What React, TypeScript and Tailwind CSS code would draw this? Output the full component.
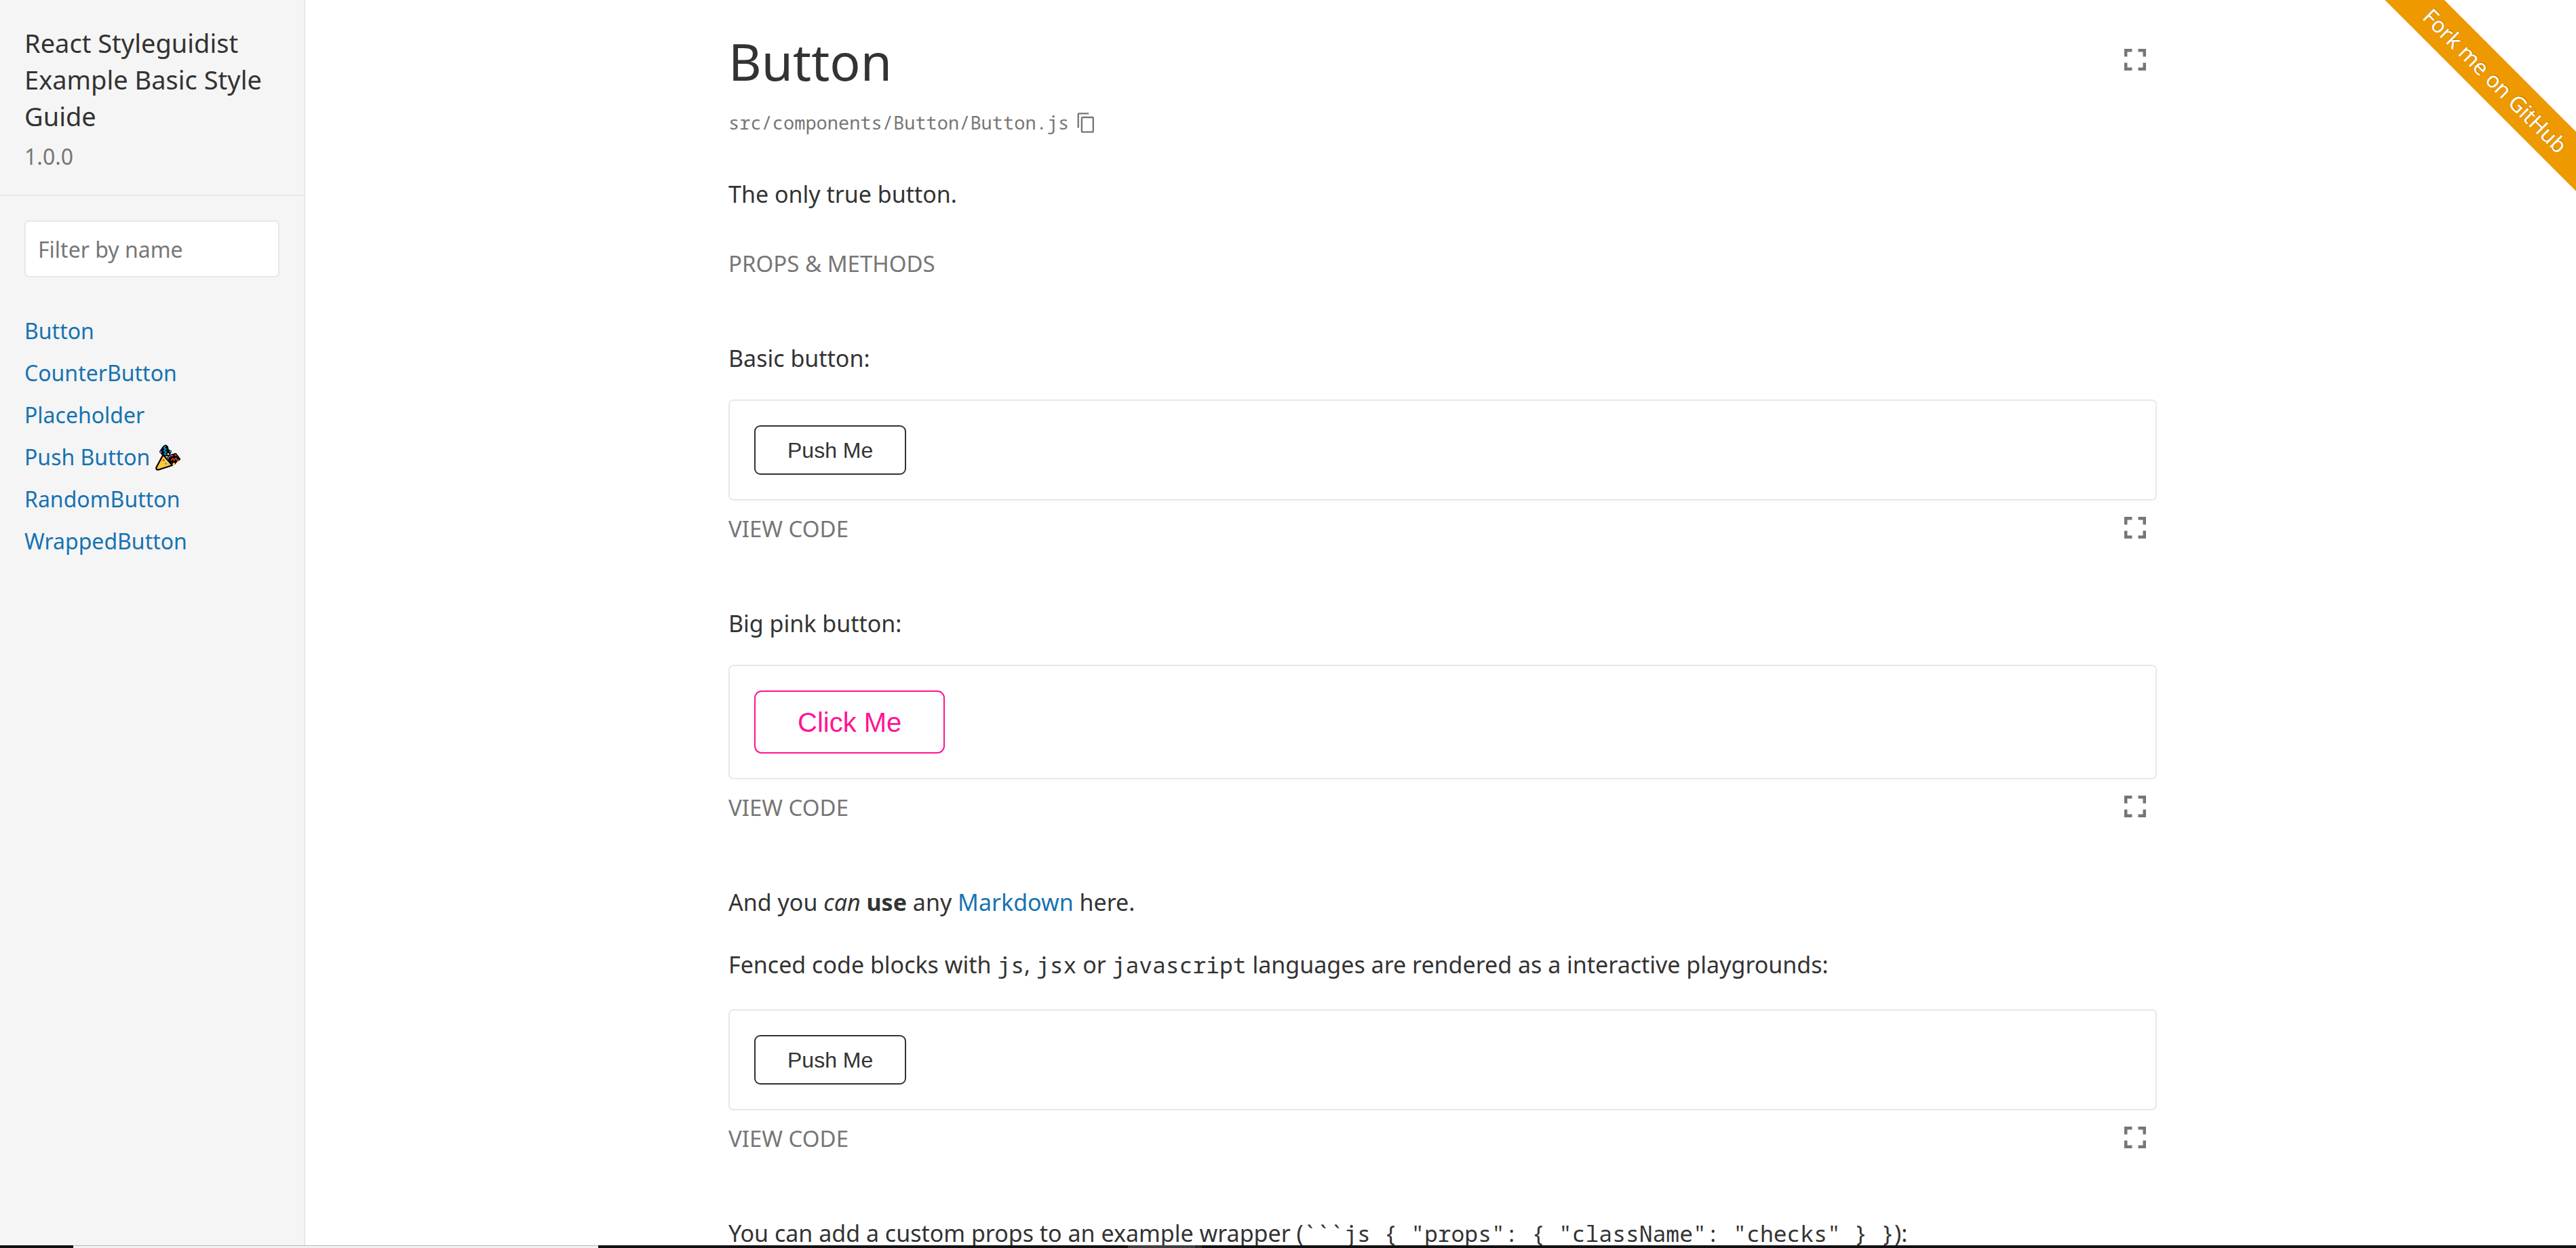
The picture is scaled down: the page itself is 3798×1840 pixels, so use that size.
import type { ReactNode } from "react";

function Fullscreen() {
  return (
    <button type="button" aria-label="Open isolated" className="mr-4 mb-1 text-[#767676]">
      <svg viewBox="0 0 32 32" className="block size-8" fill="currentColor" aria-hidden="true">
        <path d="M0 0h11.500v4.500H4.500V11.500H0zM20.500 0H32v11.500h-4.500V4.500h-7zM0 20.500h4.500v7h7V32H0zM27.500 20.500H32V32H20.500v-4.500h7z" />
      </svg>
    </button>
  );
}

function Party() {
  return (
    <svg viewBox="5 4 38 39" className="h-[39px] w-[38px]" aria-hidden="true">
      <g stroke="#000" strokeLinejoin="round" strokeLinecap="round" fill="#000">
        <path strokeWidth="4" d="M13 15L17 9L20 6.500L22 8L23 13L27 14.500L24 20L17 19Z" />
        <path strokeWidth="4" d="M24 25L28 21L35 19L37 22L40 26L36 28L33 32L29 30Z" />
      </g>
      <path d="M16.500 19.500L30 35L10 41.500Q5.500 42 6.500 38Z" fill="#ffc83d" stroke="#000" strokeWidth="2.200" strokeLinejoin="round" />
      <g fill="none" strokeWidth="1.500" strokeLinecap="round" strokeLinejoin="round">
        <path d="M20 7L17.500 9.500L21 11L17.500 13.500L21.500 15.500L18 18L21 19.500" stroke="#00a6ed" />
        <path d="M23.500 26Q24.500 21 31 20.500" stroke="#8467d7" />
        <path d="M28 28L31 24.500L32.500 28L35.500 24L37 28L39.500 27" stroke="#f03a17" />
      </g>
      <circle cx="13" cy="15.500" r="1.400" fill="#8467d7" />
      <circle cx="27" cy="14.500" r="1.400" fill="#00a6ed" />
      <circle cx="24" cy="18.500" r="1.400" fill="#fff100" />
      <circle cx="35" cy="20" r="1.500" fill="#f03a17" />
      <circle cx="32.500" cy="32.500" r="1.500" fill="#fff100" />
      <circle cx="17" cy="27.500" r="1.400" fill="#f03a17" />
      <circle cx="20.500" cy="32.500" r="1.500" fill="#26b0d9" />
    </svg>
  );
}

function Code({ children }: { children: ReactNode }) {
  return <code className="font-['Noto_Sans_Mono','DejaVu_Sans_Mono',monospace] text-[33px] whitespace-pre">{children}</code>;
}

function Example({ children }: { children: ReactNode }) {
  return (
    <div className="mb-[89px]">
      <div className="rounded-[7px] border-2 border-[#e8e8e8] p-9">{children}</div>
      <div className="mt-[19px] flex h-[46px] items-center justify-between">
        <button type="button" className="text-[33px] leading-[46px] text-[#767676]">VIEW CODE</button>
        <Fullscreen />
      </div>
    </div>
  );
}

function PushButton() {
  return (
    <button type="button" className="block h-[73px] rounded-[9px] border-2 border-[#333] bg-white px-[47px] font-['Liberation_Sans',Arial,sans-serif] text-[32px] leading-9">
      Push Me
    </button>
  );
}

function Para({ children }: { children: ReactNode }) {
  return <p className="mb-[34px] text-[34px] leading-[54px]">{children}</p>;
}

const links = ["Button", "CounterButton", "Placeholder", "Push Button", "RandomButton", "WrappedButton"];

export default function App() {
  return (
    <div className="relative flex h-screen flex-col overflow-hidden bg-white font-['Noto_Sans','Open_Sans',sans-serif] text-[#333]">
      <div className="flex min-h-0 flex-1">
        <aside className="w-[450px] shrink-0 border-r-2 border-[#e8e8e8] bg-[#f5f5f5]">
          <header className="border-b-2 border-[#e8e8e8] px-9 pt-9 pb-8">
            <h1 className="text-[38px] leading-[54px]">React Styleguidist Example Basic Style Guide</h1>
            <p className="mt-2 text-[32px] leading-[49px] text-[#767676]">1.0.0</p>
          </header>
          <div className="p-9">
            <input
              type="search"
              aria-label="Filter by name"
              placeholder="Filter by name"
              className="block h-[84px] w-full rounded-[7px] border-2 border-[#e8e8e8] bg-white px-[18px] text-[32px] placeholder:text-[#767676]"
            />
            <ul className="mt-12">
              {links.map((name) => (
                <li key={name} className="flex h-[62px] items-center gap-2 text-[32px] leading-[62px]">
                  <a href={"#" + name} className="text-[#1673b1]">{name}</a>
                  {name === "Push Button" && <Party />}
                </li>
              ))}
            </ul>
          </div>
        </aside>
        <main className="min-w-0 flex-1 overflow-hidden pl-1.5">
          <div className="mx-auto max-w-[2106px] pt-9">
            <div className="flex items-center justify-between">
              <h2 className="text-[75px] leading-[108px]">Button</h2>
              <Fullscreen />
            </div>
            <div className="flex h-[74px] items-center gap-3 text-[#767676]">
              <span className="font-['Noto_Sans_Mono','DejaVu_Sans_Mono',monospace] text-[27px]">src/components/Button/Button.js</span>
              <button type="button" aria-label="Copy to clipboard">
                <svg viewBox="0 0 27 32" className="h-[30px] w-[26px]" fill="none" stroke="currentColor" strokeWidth="2.500" aria-hidden="true">
                  <path d="M1.500 24V3Q1.500 1.500 3 1.500H18" />
                  <rect x="7" y="7.500" width="18" height="23" rx="1.500" />
                </svg>
              </button>
            </div>
            <div className="mt-[41px] mb-[53px]">
              <Para>The only true button.</Para>
            </div>
            <button type="button" className="mb-[89px] block text-[33px] leading-[46px] text-[#767676]">PROPS &amp; METHODS</button>
            <Para>Basic button:</Para>
            <Example><PushButton /></Example>
            <Para>Big pink button:</Para>
            <Example>
              <button type="button" className="block h-[93px] rounded-[11px] border-2 border-[#ff1493] bg-white px-[62px] font-['Liberation_Sans',Arial,sans-serif] text-[40px] leading-[46px] text-[#ff1493]">
                Click Me
              </button>
            </Example>
            <Para>
              And you <em>can</em> <strong>use</strong> any <a href="#markdown" className="text-[#1673b1]">Markdown</a> here.
            </Para>
            <p className="mb-[34px] text-[34px] leading-[62px]">
              Fenced code blocks with <Code>js</Code>, <Code>jsx</Code> or <Code>javascript</Code> languages are rendered as a interactive playgrounds:
            </p>
            <Example><PushButton /></Example>
            <Para>
              You can add a custom props to an example wrapper (<Code>{'```js { "props": { "className": "checks" } }'}</Code>):
            </Para>
          </div>
        </main>
      </div>
      <footer className="flex h-1 shrink-0 bg-[#101012]">
        <div className="w-[108px]" />
        <div className="w-[774px] border-t border-[#b8b8b8] bg-[#f3f1f2]" />
        <div className="w-[781px]" />
        <div className="w-[100px] bg-[#3e3e3f]" />
        <div className="ml-px w-2 bg-[#2c2c2d]" />
      </footer>
      <div className="absolute top-0 right-0 size-[400px] overflow-hidden">
        <a
          href="#github"
          className="absolute top-[88px] -right-[131px] block w-[500px] rotate-45 bg-[#ee9900] text-center text-[32px] leading-[62px] text-white [text-shadow:0_-1px_1px_rgba(0,0,0,0.3)]"
        >
          Fork me on GitHub
        </a>
      </div>
    </div>
  );
}
